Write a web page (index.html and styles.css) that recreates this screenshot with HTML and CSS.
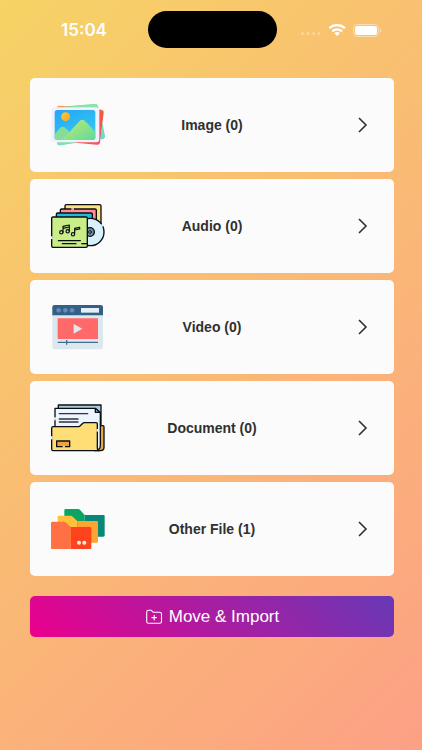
FILE: index.html
```html
<!DOCTYPE html>
<html lang="en">
<head>
<meta charset="utf-8">
<meta name="viewport" content="width=device-width, initial-scale=1">
<title>Files</title>
<link rel="stylesheet" href="styles.css">
</head>
<body>
<header class="status">
  <time class="clock">15:04</time>
  <div class="island"></div>
  <svg class="signals" viewBox="0 0 82 18" fill="#fff" aria-hidden="true">
    <g opacity=".32"><circle cx="2.500" cy="12.500" r="1.500"/><circle cx="8" cy="12.500" r="1.500"/><circle cx="13.500" cy="12.500" r="1.500"/><circle cx="19" cy="12.500" r="1.500"/></g>
    <g fill="none" stroke="#fff" stroke-width="2.300"><path d="M29.300 7.200a11.300 11.300 0 0 1 15.600 0"/><path d="M32.200 10.300a7.200 7.200 0 0 1 9.800 0"/></g>
    <path d="M34.300 12.200a4.300 4.300 0 0 1 5.600 0L37.100 15.100z"/>
    <rect x="53.500" y="3.500" width="25" height="12" rx="3.800" fill="none" stroke="#fff" stroke-opacity=".45"/>
    <rect x="55" y="5" width="22" height="9" rx="2.500"/>
    <path d="M80 7.500c1.700.7 1.700 3.300 0 4z" opacity=".5"/>
  </svg>
</header>
<main class="content">
  <nav class="list" aria-label="File categories">
    <a class="card" href="#image">
      <svg class="icon" viewBox="0 -9 240 228" aria-hidden="true">
        <defs>
          <linearGradient id="sky" x1="0" y1="0" x2=".6" y2="1"><stop stop-color="#25a5f5"/><stop offset="1" stop-color="#35c8f2"/></linearGradient>
          <linearGradient id="hill" x1="0" y1="0" x2="1" y2="1"><stop stop-color="#c3ec70"/><stop offset="1" stop-color="#60d99e"/></linearGradient>
          <linearGradient id="mint" x1="0" y1="0" x2="1" y2="1"><stop stop-color="#7ee3a2"/><stop offset="1" stop-color="#6ddbd0"/></linearGradient>
          <linearGradient id="coral" x1="0" y1="0" x2="1" y2="1"><stop stop-color="#ff9a52"/><stop offset=".6" stop-color="#ee5a45"/><stop offset="1" stop-color="#ff5268"/></linearGradient>
          <linearGradient id="sun" x1="0" y1="0" x2="1" y2="1"><stop stop-color="#ffcb38"/><stop offset="1" stop-color="#f2a527"/></linearGradient>
        </defs>
        <path d="M58 50 164 42q8 0 10 7l20 89q1 8-7 9L60 166q-8 0-9-8z" fill="url(#mint)"/>
        <path d="M58 47 184 59q8 2 7 9l-11 90q-2 8-10 6L50 153V53q2-7 8-6z" fill="url(#coral)"/>
        <path d="m187 98 8 40q1 7-7 9l-7 1z" fill="#70dcc3"/>
        <path d="M80 50 164 42q8 0 10 7l1 4z" fill="#8be2ac"/>
        <path d="M51 154h75l-66 12q-8 0-9-8z" fill="#7fdfb0"/>
        <rect x="34" y="52" width="144" height="105" rx="10" fill="#f1f0fc"/>
        <rect x="44" y="60" width="122" height="90" rx="8" fill="url(#sky)"/>
        <circle cx="77" cy="80" r="13.500" fill="url(#sun)"/>
        <path d="M44 132 61 113q7-6 14 0l23 21v16H52q-8 0-8-8z" fill="#86dc9b"/>
        <path d="m66 150 53-57q8-7 16 0l31 32v17q0 8-8 8z" fill="url(#hill)"/>
      </svg>
      <span class="label">Image (0)</span>
      <svg class="chevron" viewBox="0 0 10 16" aria-hidden="true"><path d="m1 1 7 7-7 7"/></svg>
    </a>
    <a class="card" href="#audio">
      <svg class="icon" viewBox="0 -6 240 228" aria-hidden="true">
        <g stroke="#080e14" stroke-width="4" stroke-linejoin="round" stroke-linecap="round">
          <rect x="75" y="44" width="108" height="80" rx="4" fill="#ffe07b"/>
          <rect x="61" y="57" width="108" height="80" rx="4" fill="#ff8d9a"/>
          <rect x="49" y="69" width="108" height="80" rx="4" fill="#23bad3"/>
          <circle cx="151" cy="126" r="41" fill="#d7f0fc"/>
          <circle cx="150" cy="126" r="13" fill="#6c8d9d"/>
          <circle cx="150" cy="126" r="4" fill="#bdeaf9" stroke-width="3"/>
          <rect x="35" y="81" width="107" height="91" rx="4" fill="#caed87"/>
          <g fill="none" stroke-width="3.500"><path d="M69 127V109l19-4v19M69 115l19-4M104 130V115l15-3v5l-15 3"/><circle cx="64" cy="127" r="5"/><circle cx="83" cy="124" r="5"/><circle cx="99" cy="133" r="5"/><path d="M55 152H121M67 161H108"/></g>
        </g>
        <path d="M35 139v8" stroke="#fbfbfb" stroke-width="5"/>
        <path d="M94 57h8" stroke="#ffc0c5" stroke-width="5"/>
        <path d="m185 103 4 6" stroke="#fbfbfb" stroke-width="5"/>
        <path d="M124 161h17" stroke="#080e14" stroke-width="4"/>
      </svg>
      <span class="label">Audio (0)</span>
      <svg class="chevron" viewBox="0 0 10 16" aria-hidden="true"><path d="m1 1 7 7-7 7"/></svg>
    </a>
    <a class="card" href="#video">
      <svg class="icon" viewBox="0 -3 240 228" aria-hidden="true">
        <rect x="37" y="45" width="152" height="133" rx="7" fill="#dce8ee"/>
        <path d="M37 76V52q0-7 7-7h138q7 0 7 7v24z" fill="#336087"/>
        <g fill="#638bb4"><circle cx="56" cy="61" r="7"/><circle cx="76" cy="61" r="7"/><circle cx="96" cy="61" r="7"/></g>
        <path d="M123 54h54v14h-54z" fill="#e4eff5"/>
        <path d="M53 85h121v62H53z" fill="#ff6969"/>
        <path d="m101 102 26 14-26 15z" fill="#e4e8ec"/>
        <path d="M53 157h121M80 150v14" stroke="#406d92" stroke-width="4"/>
      </svg>
      <span class="label">Video (0)</span>
      <svg class="chevron" viewBox="0 0 10 16" aria-hidden="true"><path d="m1 1 7 7-7 7"/></svg>
    </a>
    <a class="card" href="#document">
      <svg class="icon" viewBox="0 0 240 228" aria-hidden="true">
        <g stroke="#0b1016" stroke-width="4" stroke-linejoin="round" stroke-linecap="round">
          <path d="M55 54v-9h128v70H55z" fill="#a9ccd5"/>
          <path d="M174 107h15q3 0 3 4v61q0 10-10 10h-18z" fill="#e9a63d"/>
          <path d="M45 110V55h119l17 13v97q0 14-9 14H45z" fill="#edf6ff"/>
          <path d="M166 55v12h14z" fill="#8bbac7"/>
          <path d="M35 114q0-4 4-4h76q4 0 7-4l5-5q3-3 7-3h34q4 0 4 4v71q0 9 6 9H39q-4 0-4-4z" fill="#ffdf75"/>
          <path d="M58 71h85M58 87h56M58 96h56" stroke="#30333d" fill="none"/>
          <path d="M50 153h39v17H50z" fill="#eca53d"/>
        </g>
        <path d="M45 82v9M35 139v9" stroke="#fbfbfb" stroke-width="5"/>
        <path d="M172 117v8" stroke="#fff0ba" stroke-width="5"/>
        <path d="M68 170h7" stroke="#ffdf75" stroke-width="5"/>
      </svg>
      <span class="label">Document (0)</span>
      <svg class="chevron" viewBox="0 0 10 16" aria-hidden="true"><path d="m1 1 7 7-7 7"/></svg>
    </a>
    <a class="card" href="#other">
      <svg class="icon" viewBox="0 3 240 228" aria-hidden="true">
        <path d="M73 61q0-4 4-4h37q4 0 7 4l13 14v65H73z" fill="#0aa563"/>
        <path d="M134 75h56q4 0 4 4v57q0 4-4 4h-56z" fill="#078977"/>
        <path d="M53 81q0-4 4-4h34q5 0 8 4l13 12v65H53z" fill="#ffc13b"/>
        <path d="M112 93h58q4 0 4 4v57q0 4-4 4h-58z" fill="#ffa333"/>
        <path d="M33 99q0-4 4-4h35q4 0 7 4l13 12v66H37q-4 0-4-4z" fill="#ff7044"/>
        <path d="M92 111h58q4 0 4 4v58q0 4-4 4H92z" fill="#ff441d"/>
        <circle cx="117" cy="158" r="6" fill="#ffede8"/><circle cx="133" cy="158" r="6" fill="#ffede8"/>
      </svg>
      <span class="label">Other File (1)</span>
      <svg class="chevron" viewBox="0 0 10 16" aria-hidden="true"><path d="m1 1 7 7-7 7"/></svg>
    </a>
  </nav>
  <button class="import" type="button">
    <svg class="import-icon" viewBox="0 0 18 16" aria-hidden="true"><path d="M1.700 3.200Q1.700 1.300 3.500 1.300H6.300l2 2H14.600Q16.500 3.300 16.500 5.200v7.200q0 1.900-1.900 1.900H3.600q-1.900 0-1.900-1.900zM6.900 8.600h4.600M9.200 6.300v4.600"/></svg>
    Move &amp; Import
  </button>
</main>
</body>
</html>
```
FILE: styles.css
```css
* {
  box-sizing: border-box;
}

body {
  margin: 0;
  min-height: 100vh;
  background: linear-gradient(135deg, #f6d365, #fda085);
  font-family: "Liberation Sans", Arial, sans-serif;
}

.status {
  display: grid;
  grid-template-columns: 1fr 129px 1fr;
  align-items: center;
  justify-items: center;
  padding: 11px 17px 0 20px;
  color: #fff;
}

.clock {
  font-family: Inter, sans-serif;
  font-size: 17px;
  font-weight: 600;
}

.island {
  width: 100%;
  height: 37px;
  border-radius: 19px;
  background: #000;
}

.signals {
  width: 82px;
  height: 18px;
}

.content {
  padding: 30px 28px 30px 30px;
}

.list {
  display: grid;
  gap: 7px;
}

.card {
  display: grid;
  grid-template-columns: 80px 1fr 80px;
  align-items: center;
  height: 94px;
  padding: 0 10px;
  border-radius: 5px;
  background: #fbfbfb;
  color: #303030;
  text-decoration: none;
}

.icon {
  width: 80px;
  height: 76px;
}

.label {
  font-size: 14px;
  font-weight: 700;
  line-height: 20px;
  text-align: center;
}

.chevron {
  width: 10px;
  height: 16px;
  margin-right: 16px;
  justify-self: end;
  fill: none;
  stroke: #303030;
  stroke-width: 1.6;
}

.import {
  display: flex;
  align-items: center;
  justify-content: center;
  gap: 6px;
  width: 100%;
  height: 41px;
  margin-top: 20px;
  border: 0;
  border-radius: 5px;
  background: linear-gradient(45deg, #ec008c, #6739b6);
  color: #fff;
  font-family: inherit;
  font-size: 17px;
}

.import-icon {
  width: 18px;
  height: 16px;
  fill: none;
  stroke: #fff;
  stroke-width: 1.1;
  stroke-linecap: round;
  stroke-linejoin: round;
}
```
